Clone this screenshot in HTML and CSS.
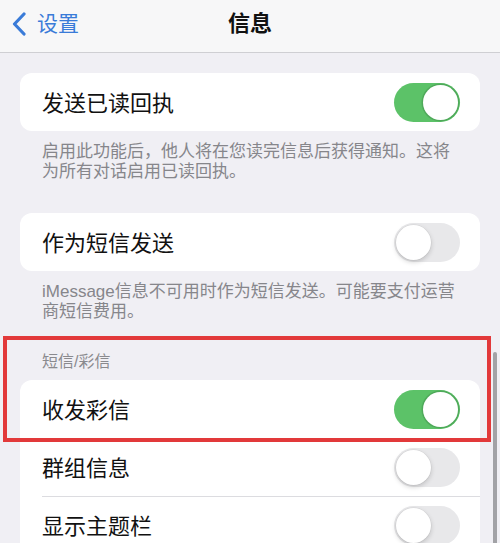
FILE: index.html
```html
<!DOCTYPE html>
<html lang="zh-CN">
<head>
<meta charset="utf-8">
<title>信息</title>
<link rel="stylesheet" href="styles.css">
</head>
<body>
<div class="screen">
  <header class="nav">
    <div class="back">
      <svg class="chev" width="16" height="24" viewBox="0 0 16 24"><path d="M13 2 L3.5 12 L13 22" fill="none" stroke="currentColor" stroke-width="3.2" stroke-linecap="round" stroke-linejoin="round"/></svg>
      <span class="back-label">设置</span>
    </div>
    <div class="title">信息</div>
  </header>

  <main class="content">
    <section class="group first">
      <div class="card">
        <div class="row">
          <span class="label">发送已读回执</span>
          <span class="toggle on"><span class="knob"></span></span>
        </div>
      </div>
      <p class="footer">启用此功能后，他人将在您读完信息后获得通知。这将为所有对话启用已读回执。</p>
    </section>

    <section class="group">
      <div class="card">
        <div class="row">
          <span class="label">作为短信发送</span>
          <span class="toggle"><span class="knob"></span></span>
        </div>
      </div>
      <p class="footer">iMessage信息不可用时作为短信发送。可能要支付运营商短信费用。</p>
    </section>

    <section class="group sms">
      <h2 class="section-header">短信/彩信</h2>
      <div class="card">
        <div class="row">
          <span class="label">收发彩信</span>
          <span class="toggle on"><span class="knob"></span></span>
        </div>
        <div class="row divided">
          <span class="label">群组信息</span>
          <span class="toggle"><span class="knob"></span></span>
        </div>
        <div class="row divided">
          <span class="label">显示主题栏</span>
          <span class="toggle"><span class="knob"></span></span>
        </div>
      </div>
    </section>
  </main>

  <div class="highlight"></div>
  <div class="scrollbar"></div>
</div>
</body>
</html>
```

FILE: styles.css
```css
* { box-sizing: border-box; }

html, body {
  margin: 0;
  padding: 0;
}

body {
  font-family: "Liberation Sans", "Noto Sans CJK SC", sans-serif;
  background: #f0eff4;
  color: #111;
}

.screen {
  position: relative;
  width: 500px;
  height: 543px;
  overflow: hidden;
  background: #f0eff4;
}

.nav {
  position: relative;
  height: 53px;
  background: #f7f7f8;
  border-bottom: 1px solid #cfcfd3;
  display: flex;
  align-items: center;
  justify-content: center;
  padding-bottom: 5px;
}

.back {
  position: absolute;
  left: 11px;
  top: 12px;
  display: flex;
  align-items: center;
  gap: 10px;
  color: #3a7bd8;
}

.chev { display: block; }

.back-label {
  font-size: 21px;
  line-height: 24px;
}

.title {
  font-size: 22px;
  font-weight: 600;
  line-height: 26px;
  color: #111;
}

.content {
  padding: 20px 20px 0 20px;
}

.group { margin-top: 31px; }
.group.first { margin-top: 0; }
.group.sms { margin-top: 30px; }

.card {
  background: #fff;
  border-radius: 12px;
  overflow: hidden;
}

.row {
  height: 58px;
  display: flex;
  align-items: center;
  justify-content: space-between;
  padding: 0 20px 0 22px;
  position: relative;
}

.row.divided::before {
  content: "";
  position: absolute;
  left: 22px;
  right: 0;
  top: 0;
  border-top: 1px solid #dcdce0;
}

.label {
  font-size: 22px;
  line-height: 28px;
  padding-top: 3px;
  color: #111;
}

.footer {
  margin: 0;
  padding: 11px 18px 0 22px;
  font-size: 17px;
  line-height: 20px;
  color: #86868b;
}

.section-header {
  margin: 0 0 8px 0;
  padding-left: 22px;
  font-size: 16px;
  line-height: 20px;
  font-weight: 400;
  color: #8a8a8e;
}

.toggle {
  position: relative;
  width: 66px;
  height: 39px;
  border-radius: 20px;
  background: #e8e8ea;
  flex: none;
}

.toggle .knob {
  position: absolute;
  top: 2px;
  left: 2px;
  width: 35px;
  height: 35px;
  border-radius: 50%;
  background: #fff;
  box-shadow: 0 2px 5px rgba(0,0,0,0.18), 0 0 0 0.5px rgba(0,0,0,0.06);
}

.toggle.on {
  background: #5cc268;
}

.toggle.on .knob {
  left: 29px;
  box-shadow: 0 0 0 1.5px #4fa95a;
}

.highlight {
  position: absolute;
  left: 3px;
  top: 336px;
  width: 488px;
  height: 106px;
  border: 4px solid #e2393a;
}

.scrollbar {
  position: absolute;
  right: 3px;
  top: 352px;
  width: 4px;
  height: 200px;
  border-radius: 2px;
  background: #a2a2a6;
}
```
